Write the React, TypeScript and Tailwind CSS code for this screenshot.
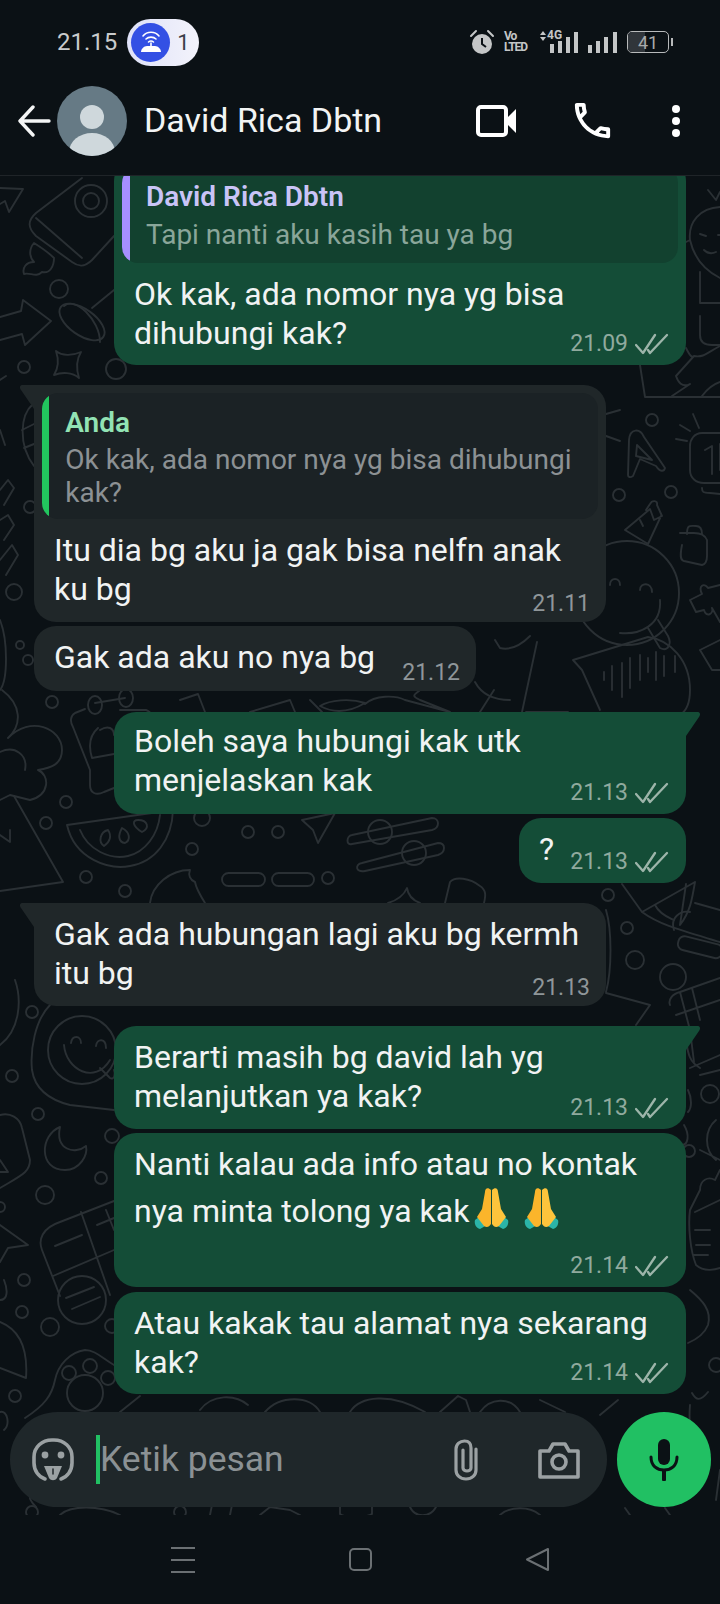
import React from 'react';

function Wallpaper() {
  return (
    <svg className="absolute inset-0 w-full h-full" viewBox="0 176 720 1339" preserveAspectRatio="none" fill="none" stroke="#2a3034" strokeWidth="1.9" strokeLinecap="round" strokeLinejoin="round">
      {/* top left */}
      <path d="M0 188L23 189L9 212L5 201L0 204" />
      <path d="M82 178L36 213C27 221 28 228 36 236L72 262C80 268 86 266 92 260L114 236M36 218L82 258" />
      <path d="M34 243C28 250 30 258 34 262C26 262 22 268 24 274C30 272 36 278 42 272C50 274 54 266 54 258C48 252 42 248 34 243Z" />
      <circle cx="91" cy="201" r="16" />
      <circle cx="91" cy="201" r="8" />
      <circle cx="59" cy="289" r="9" />
      <path d="M0 317L21 311L23 300L51 321L25 345L22 334L0 340" />
      <ellipse cx="82" cy="322" rx="26" ry="13" transform="rotate(35 82 322)" />
      <path d="M64 306C75 296 100 320 100 342M92 308L114 290" />
      <path d="M56 351C62 356 72 356 81 352C76 360 76 368 79 378C72 372 62 372 54 375C59 367 59 360 56 351Z" />
      <circle cx="24" cy="367" r="6" />
      <circle cx="116" cy="369" r="10" />
      <path d="M33 404C20 415 18 445 34 466M22 430L34 424M24 448L34 444" />
      <path d="M0 380L6 376M0 430L5 445" />
      <path d="M0 490L8 480L14 488L4 505M0 520L8 515L14 525L4 540" />
      <circle cx="30" cy="507" r="6" />
      <path d="M0 560L12 545L18 555L6 575" />
      <circle cx="14" cy="592" r="8" />
      <circle cx="28" cy="660" r="5" />
      <circle cx="20" cy="645" r="4" />
      <path d="M0 620C8 640 8 680 0 690" />
      {/* top right */}
      <path d="M708 190L716 200L720 192M690 240C688 222 700 208 720 207M690 240L686 242M690 240C695 262 708 272 720 278" />
      <path d="M700 234L706 236M718 235L720 235M704 250C708 254 712 254 716 252" />
      <path d="M700 272V303H720M700 316V335C700 342 705 345 712 345H720" />
      <path d="M640 365L645 397H720M686 348C690 356 692 358 694 356C704 358 708 352 720 346M694 356L676 376C678 382 682 388 690 384L672 396M702 396C708 388 714 384 720 382" />
      <path d="M628 475L629 440C630 428 640 428 644 437L665 468C664 472 660 472 656 466L640 459L633 476C630 478 628 477 628 475ZM637 445L652 460L636 456Z" />
      <circle cx="652" cy="420" r="6" />
      <path d="M693 414L699 428M680 425L690 431M676 439L687 441" />
      <path d="M720 433H702C694 433 690 440 690 446V470C690 478 696 483 704 483H720M705 450L712 446V474M720 444V470M702 488C702 494 704 492 720 494" />
      <path d="M620 410L606 414M606 436L620 441" />
      <circle cx="619" cy="495" r="6" />
      <circle cx="671" cy="492" r="6" />
      <path d="M625 530L650 509L654 520L662 516L657 505C658 500 652 500 650 504L646 510M625 530L648 544L661 516M640 520L643 526" />
      <path d="M682 545C680 555 680 560 684 561L702 565C706 564 707 560 707 556L707 540C705 535 700 533 694 533L680 533M687 534C687 524 690 526 696 526C701 526 702 530 702 534" />
      <path d="M720 585L708 588C704 582 698 586 702 594L690 600L696 612L704 610C706 618 714 614 712 608L720 622" />
      <circle cx="627" cy="593" r="52" fill="none" />
      <path d="M610 585C610 577 620 577 620 585M640 590C640 582 652 582 652 592M660 600C662 625 640 635 620 633" />
      <path d="M648 628L660 648C668 652 672 644 668 636L658 620" />
      <path d="M573 660L648 637M573 660L582 670L600 710M648 637C670 640 690 660 690 690C690 700 688 710 680 715" />
      <path d="M604 672V680M612 666V690M622 663V697M630 658V688M640 655V680M648 658V672M656 652V680M664 656V676M675 656V672" />
      <path d="M537 642L522 712M526 712H568M495 640L500 648C508 650 518 648 530 636" />
      <path d="M700 650L720 640M700 650L712 670L720 670" />
      {/* middle left */}
      <path d="M2 690C22 705 22 725 8 738C30 715 62 728 62 750C62 765 50 768 38 770C50 775 50 795 30 800L10 795L0 800M0 752C15 745 28 755 25 770" />
      <path d="M95 703L125 698" />
      <ellipse cx="95" cy="705" rx="7" ry="9" />
      <ellipse cx="126" cy="698" rx="7" ry="9" />
      <path d="M85 709L75 713C70 716 70 722 73 727L90 770V785C90 793 96 796 104 792L114 788M120 710H146C152 712 154 720 154 728M98 728C90 735 88 745 92 758L114 754M100 730C108 725 114 728 114 735" />
      <circle cx="52" cy="702" r="6" />
      <circle cx="66" cy="802" r="6" />
      <circle cx="46" cy="823" r="6" />
      <circle cx="86" cy="877" r="6" />
      <circle cx="125" cy="891" r="6" />
      <circle cx="192" cy="849" r="6" />
      <circle cx="248" cy="832" r="6" />
      <circle cx="278" cy="832" r="6" />
      <circle cx="328" cy="878" r="6" />
      <circle cx="202" cy="818" r="8" />
      <path d="M67 825C75 860 110 870 130 866C155 862 172 840 173 810L67 825ZM80 830C88 850 110 860 128 856C145 852 158 835 160 815" />
      <path d="M108 830C100 832 98 842 104 846C110 842 112 836 108 830ZM122 828C118 835 118 842 125 843C131 840 130 832 122 828ZM138 820C132 820 132 826 142 832C150 828 148 820 138 820Z" />
      <path d="M14 796L63 882L0 891M0 835L10 842L10 830" />
      <rect x="222" y="873" width="43" height="13" rx="6.5" />
      <rect x="272" y="873" width="42" height="13" rx="6.5" />
      <path d="M302 820L335 813L318 843L313 830Z" />
      <path d="M352 835L432 818C440 818 440 828 432 830L352 844C346 846 346 836 352 835Z" />
      <circle cx="380" cy="832" r="12" />
      <path d="M362 863L438 843C446 843 446 852 438 855L365 871C355 873 355 864 362 863Z" />
      <circle cx="414" cy="853" r="12" />
      <path d="M150 903C152 885 170 870 190 870C188 875 190 880 195 882C196 888 200 895 205 903" />
      <path d="M388 903C398 900 404 895 407 888C408 895 412 900 420 903M445 903L450 882C455 876 470 878 480 886C486 890 486 895 484 903" />
      <path d="M320 706C330 700 350 698 365 703C350 712 335 714 320 706ZM365 704C375 695 395 695 405 700M405 700L450 712L420 700C410 695 415 695 420 690" />
      <path d="M180 700L198 694L205 712M250 712L290 700L295 712M310 700L322 712" />
      <path d="M475 682C482 695 495 700 510 700M480 712L494 690" />
      {/* middle right */}
      <path d="M622 884L642 912M642 912L695 882M642 912C660 925 680 930 720 942M695 882C692 900 690 912 680 925L686 884M655 905C660 915 670 918 674 920" />
      <path d="M674 930C670 918 680 910 690 912M695 903L720 910" />
      <rect x="680" y="935" width="45" height="14" rx="6" transform="rotate(14 680 935)" />
      <circle cx="608" cy="895" r="6" />
      <circle cx="627" cy="928" r="6" />
      <circle cx="635" cy="960" r="9" />
      <circle cx="673" cy="977" r="13" />
      <path d="M606 910C612 930 612 970 606 992M606 993L650 1005L636 1025" />
      <path d="M670 1005C668 1000 672 994 680 992L720 978M680 992L690 1030M676 1015L720 1000M690 1030L694 1062M692 988L700 1020" />
      <path d="M690 1068L720 1055M686 1040C688 1055 690 1062 700 1068" />
      <path d="M700 1075L720 1070M688 1090C692 1098 692 1108 688 1112" />
      <path d="M684 1125C690 1135 688 1145 682 1145" />
      <circle cx="710" cy="1094" r="9" />
      <path d="M716 1120C704 1130 704 1150 716 1160M700 1150L720 1160" />
      {/* right lower */}
      <circle cx="689" cy="1151" r="6" />
      <path d="M720 1170L715 1180C708 1176 700 1180 700 1190L690 1210C688 1225 690 1250 696 1265C704 1272 715 1270 720 1268M695 1212L720 1200M696 1245H710M694 1255H708M695 1230H710" />
      <path d="M690 1290C702 1300 712 1310 708 1325C704 1335 695 1340 688 1343" />
      <circle cx="716" cy="1365" r="7" />
      <path d="M692 1393C696 1400 700 1402 708 1392M690 1405C688 1430 692 1440 705 1440M720 1470L716 1500" />
      {/* left lower */}
      <path d="M0 1045C20 1030 22 1000 15 980" />
      <circle cx="32" cy="1012" r="6" />
      <path d="M50 1005C35 1020 30 1050 32 1070C35 1090 50 1100 70 1105L114 1110" />
      <circle cx="82" cy="1050" r="34" />
      <path d="M71 1043C72 1035 81 1035 81 1043M96 1046C97 1038 106 1038 106 1048M64 1045C66 1070 95 1085 110 1060M100 1068L110 1078C114 1080 116 1075 114 1070" />
      <circle cx="12" cy="1076" r="6" />
      <circle cx="38" cy="1114" r="6" />
      <circle cx="101" cy="1178" r="6" />
      <circle cx="45" cy="1195" r="9" />
      <circle cx="24" cy="1280" r="6" />
      <circle cx="22" cy="1312" r="6" />
      <circle cx="50" cy="1327" r="9" />
      <circle cx="15" cy="1396" r="6" />
      <circle cx="112" cy="1136" r="7" />
      <circle cx="112" cy="1326" r="7" />
      <path d="M60 1127C40 1135 38 1170 65 1170C80 1170 88 1155 86 1146C75 1155 55 1150 60 1127Z" />
      <path d="M0 1115C10 1112 20 1118 22 1128L30 1160C30 1172 22 1175 0 1188M0 1160L8 1172H0" />
      <circle cx="0" cy="1207" r="5" />
      <path d="M0 1225L28 1245L8 1248L0 1262" />
      <path d="M4 1280C8 1290 8 1300 0 1300" />
      <path d="M60 1222L114 1201M60 1222C42 1228 38 1240 42 1250L60 1296M53 1276L114 1250M81 1212L110 1295M97 1225L114 1218M106 1210L114 1230M55 1246L82 1235" />
      <circle cx="82" cy="1300" r="24" />
      <path d="M66 1298L94 1287M72 1309L100 1297" />
      <path d="M0 1322C20 1330 28 1350 26 1378L0 1368" />
      <circle cx="85" cy="1393" r="18" />
      <circle cx="69" cy="1373" r="7" />
      <circle cx="90" cy="1366" r="7" />
      <circle cx="108" cy="1378" r="7" />
      <path d="M25 1418C45 1405 52 1395 55 1380C58 1365 70 1352 85 1350C95 1350 102 1358 114 1365" />
      {/* input area edges */}
      <path d="M0 1412C8 1410 10 1425 4 1430M36 1507C24 1495 32 1492 40 1500" />
      <circle cx="32" cy="1512" r="6" />
      <circle cx="180" cy="1512" r="6" />
      <path d="M120 1412L140 1396M200 1410C212 1394 235 1394 248 1405M265 1412C280 1395 310 1395 320 1412M350 1412C360 1396 390 1392 425 1412M440 1412L458 1396L466 1400L470 1412M480 1412C490 1398 510 1396 520 1412M540 1400L565 1412M600 1415L618 1400" />
      <path d="M60 1515C70 1505 100 1505 120 1515M210 1515L212 1505M230 1515L232 1505M260 1515L270 1507L290 1510L300 1515M340 1507V1514C345 1518 365 1518 372 1514V1507M410 1507C415 1518 430 1518 436 1507M500 1515C510 1506 530 1506 540 1515M625 1508L630 1515M665 1508L670 1515" />
    </svg>
  );
}

function Ticks() {
  return (
    <svg width="34" height="22" viewBox="0 0 34 22" fill="none" stroke="#9db5aa" strokeWidth="2.3" strokeLinecap="round" strokeLinejoin="round">
      <path d="M1 12L8 20L20 2" />
      <path d="M13 17L15 20L32 2" />
    </svg>
  );
}

function Tail({ out }: { out?: boolean }) {
  if (out) {
    return (
      <svg className="absolute -right-[15px] top-0" width="17" height="26" viewBox="0 0 17 26">
        <path d="M0 0H13C16 0 17 2 15 5L2 24V26H0Z" fill="#144d37" />
      </svg>
    );
  }
  return (
    <svg className="absolute -left-[15px] top-0" width="17" height="26" viewBox="0 0 17 26">
      <path d="M17 0H4C1 0 0 2 2 5L15 24V26H17Z" fill="#202729" />
    </svg>
  );
}

function Time({ value, out }: { value: string; out?: boolean }) {
  return (
    <div className={`absolute flex items-center gap-[7px] text-[23px] leading-[30px] ${out ? 'right-[17px] bottom-[6px]' : 'right-[16px] bottom-[3px]'}`}>
      <span className={out ? 'text-[#90aa9e]' : 'text-[#8f9699]'}>{value}</span>
      {out && <Ticks />}
    </div>
  );
}

function Bubble({ out, tail, time, width, className, children }: { out?: boolean; tail?: boolean; time: string; width: string; className?: string; children: React.ReactNode }) {
  return (
    <div className={`relative rounded-[22px] ${out ? 'self-end bg-[#144d37]' : 'self-start bg-[#202729]'} ${tail ? (out ? 'rounded-tr-none' : 'rounded-tl-none') : ''} ${width} ${className || ''}`}>
      {tail && <Tail out={out} />}
      {children}
      <Time value={time} out={out} />
    </div>
  );
}

function Text({ children }: { children: React.ReactNode }) {
  return <p className="px-5 py-[12px] text-[32px] leading-[39px] text-[#f1f3f3]">{children}</p>;
}

function Pray() {
  return (
    <svg className="inline-block align-[-8px]" width="35" height="43" viewBox="0 0 35 43">
      <path d="M1 33L9 27L13 38L6 42C2 41 0 37 1 33Z" fill="#2bb5a8" />
      <path d="M34 33L26 27L22 38L29 42C33 41 35 37 34 33Z" fill="#2bb5a8" />
      <path d="M17 37V3C14 0 11 1 11 5L8 22L3 30L10 39C13 41 15 40 17 37Z" fill="#fbb52b" />
      <path d="M18 37V3C21 0 24 1 24 5L27 22L32 30L25 39C22 41 20 40 18 37Z" fill="#fdc43c" />
    </svg>
  );
}

function StatusBar() {
  return (
    <div className="h-[84px] flex items-center justify-between pl-[57px] pr-[47px]">
      <div className="flex items-center gap-[10px]">
        <span className="text-[24px] text-[#c9cbcc]">21.15</span>
        <div className="flex items-center w-[72px] h-[47px] rounded-full bg-gradient-to-r from-[#dfe2f8] to-[#f3f3fb] pl-[4px]">
          <div className="w-[39px] h-[39px] rounded-full bg-[#3350e4] flex items-center justify-center">
            <svg width="26" height="26" viewBox="0 0 26 26" fill="none" stroke="#fff" strokeWidth="1.6" strokeLinecap="round">
              <path d="M5 7C9 2 17 2 21 7" />
              <path d="M8 10C10.500 7.500 15.500 7.500 18 10" />
              <path d="M10.500 13C12 11.800 14 11.800 15.500 13" />
              <path d="M3 23C3 20 6 17 9 17H17C20 17 23 20 23 23Z" fill="#fff" stroke="none" />
              <path d="M13 14V17" />
            </svg>
          </div>
          <span className="ml-[7px] text-[22px] text-[#3b3d48]">1</span>
        </div>
      </div>
      <div className="flex items-center">
        <svg width="26" height="26" viewBox="0 0 26 26" fill="#c4c6c7">
          <circle cx="13" cy="15" r="10" />
          <path d="M13 9V15L17 18" fill="none" stroke="#0b1115" strokeWidth="2" />
          <path d="M2 7L7 2M24 7L19 2" fill="none" stroke="#c4c6c7" strokeWidth="2" strokeLinecap="round" />
        </svg>
        <div className="ml-[9px] flex flex-col text-[#c4c6c7] font-bold text-[12px] leading-[11px] tracking-[-1px] w-[26px]">
          <span>Vo</span>
          <span>LTED</span>
        </div>
        <div className="relative ml-[10px] w-[41px] h-[22px]">
          <svg className="absolute left-0 top-0" width="41" height="22" viewBox="0 0 41 22" fill="#c4c6c7">
            <path d="M3 0L6 4H0ZM3 10L6 6H0Z" />
            <rect x="10" y="13" width="4" height="9" />
            <rect x="18" y="10" width="4" height="12" />
            <rect x="26" y="6" width="4" height="16" />
            <rect x="34" y="1" width="4" height="21" />
          </svg>
          <span className="absolute left-[7px] -top-[2px] text-[12px] font-bold text-[#c4c6c7] bg-[#0b1115] leading-[12px]">4G</span>
        </div>
        <svg className="ml-[7px]" width="29" height="22" viewBox="0 0 29 22" fill="#c4c6c7">
          <rect x="0" y="14" width="4" height="8" />
          <rect x="8" y="10" width="4" height="12" />
          <rect x="16" y="6" width="4" height="16" />
          <rect x="25" y="1" width="4" height="21" />
        </svg>
        <div className="ml-[10px] relative flex items-center justify-center w-[42px] h-[22px] rounded-[5px] border border-[#b8babb] text-[18px] text-[#a8aaab] overflow-hidden">
          <div className="absolute left-0 top-0 bottom-0 w-[17px] bg-[#30353a]"></div>
          <span className="relative">41</span>
        </div>
        <div className="ml-[2px] w-[2px] h-[8px] bg-[#b8babb]"></div>
      </div>
    </div>
  );
}

function Header() {
  return (
    <div className="h-[92px] flex items-center border-b border-[#1f2428] pb-[18px]">
      <svg className="ml-[17px]" width="34" height="32" viewBox="0 0 34 32" fill="none" stroke="#f4f5f5" strokeWidth="3.4" strokeLinecap="round" strokeLinejoin="round">
        <path d="M32 16H3M16 2L3 16L16 30" />
      </svg>
      <svg className="ml-[6px]" width="70" height="70" viewBox="0 0 70 70">
        <defs>
          <clipPath id="avatar"><circle cx="35" cy="35" r="35" /></clipPath>
        </defs>
        <g clipPath="url(#avatar)">
          <rect width="70" height="70" fill="#667a85" />
          <circle cx="35" cy="31" r="12" fill="#cfd8dc" />
          <ellipse cx="35" cy="66" rx="23" ry="19" fill="#cfd8dc" />
        </g>
      </svg>
      <span className="ml-[17px] text-[34px] text-[#f2f4f4] flex-1">David Rica Dbtn</span>
      <svg width="42" height="32" viewBox="0 0 42 32">
        <rect x="2" y="2" width="28" height="28" rx="3" fill="none" stroke="#fff" strokeWidth="4" />
        <path d="M31 13L40 4V28L31 19Z" fill="#fff" />
      </svg>
      <svg className="ml-[51px]" width="47" height="47" viewBox="0 0 24 24" fill="#fff">
        <path d="M6.54 5c.06.89.21 1.76.45 2.59l-1.2 1.2c-.41-1.2-.67-2.47-.76-3.79h1.51m9.86 12.02c.85.24 1.72.39 2.6.45v1.49c-1.32-.09-2.59-.35-3.8-.75l1.2-1.19M7.5 3H4c-.55 0-1 .45-1 1 0 9.39 7.61 17 17 17 .55 0 1-.45 1-1v-3.49c0-.55-.45-1-1-1-1.24 0-2.45-.2-3.57-.57-.1-.04-.21-.05-.31-.05-.26 0-.51.1-.71.29l-2.2 2.2c-2.83-1.45-5.15-3.76-6.59-6.59l2.2-2.2c.28-.28.36-.67.25-1.02C8.7 6.45 8.5 5.25 8.5 4c0-.55-.45-1-1-1z" />
      </svg>
      <div className="ml-[56px] mr-[40px] flex flex-col gap-[4px]">
        <div className="w-[8px] h-[8px] rounded-full bg-white"></div>
        <div className="w-[8px] h-[8px] rounded-full bg-white"></div>
        <div className="w-[8px] h-[8px] rounded-full bg-white"></div>
      </div>
    </div>
  );
}

function InputBar() {
  return (
    <div className="absolute left-[10px] right-[9px] bottom-[8px] flex items-center justify-between">
      <div className="w-[597px] h-[95px] rounded-[48px] bg-[#1f272a] flex items-center">
        <svg className="ml-[22px]" width="42" height="44" viewBox="0 0 42 44" fill="none" stroke="#9ba1a3" strokeWidth="3.600" strokeLinejoin="round" strokeLinecap="round">
          <path d="M13 41C7 39 2 33 2 25V19C2 9 10 2 20 2H22C32 2 40 9 40 19V25C40 33 35 39 29 41" />
          <path d="M12 28H30L25 40C23 43 19 43 17 40Z" fill="#9ba1a3" stroke="none" />
          <path d="M21 31V36" stroke="#1f272a" strokeWidth="1.500" />
          <circle cx="13" cy="17" r="3.400" fill="#9ba1a3" stroke="none" />
          <circle cx="29" cy="17" r="3.400" fill="#9ba1a3" stroke="none" />
        </svg>
        <div className="ml-[22px] w-[4px] h-[49px] bg-[#21c063]"></div>
        <span className="text-[35.5px] text-[#8b9194] flex-1">Ketik pesan</span>
        <svg width="28" height="42" viewBox="0 0 28 42" fill="none" stroke="#9ba1a3" strokeWidth="3.200" strokeLinecap="round">
          <path d="M24 10V31C24 36 20 40 14 40C8 40 4 36 4 31V10C4 5 8 2 12.500 2C17 2 19 5 19 9V29C19 33 11 33 11 29V11" />
        </svg>
        <svg className="ml-[58px] mr-[27px]" width="42" height="38" viewBox="0 0 42 38" fill="none" stroke="#9ba1a3" strokeWidth="3.600" strokeLinejoin="round">
          <path d="M2 10H11L15 3H27L31 10H40V36H2Z" />
          <circle cx="21" cy="21" r="7" />
        </svg>
      </div>
      <div className="w-[94px] h-[95px] rounded-full bg-[#21c063] flex items-center justify-center">
        <svg width="30" height="42" viewBox="0 0 30 42" fill="#0b1115">
          <rect x="9" y="0" width="12" height="26" rx="6" />
          <path d="M2 18C2 27 8 31 15 31C22 31 28 27 28 18" fill="none" stroke="#0b1115" strokeWidth="3" strokeLinecap="round" />
          <rect x="13" y="30" width="4" height="12" rx="1" />
        </svg>
      </div>
    </div>
  );
}

function NavBar() {
  return (
    <div className="h-[89px] flex items-center justify-center">
      <div className="flex flex-col gap-[10px] w-[24px]">
        <div className="h-[2px] bg-[#6b7073]"></div>
        <div className="h-[2px] bg-[#6b7073]"></div>
        <div className="h-[2px] bg-[#6b7073]"></div>
      </div>
      <div className="ml-[154px] w-[23px] h-[23px] rounded-[5px] border-2 border-[#6b7073]"></div>
      <svg className="ml-[153px]" width="25" height="25" viewBox="0 0 25 25" fill="none" stroke="#6b7073" strokeWidth="2" strokeLinejoin="round">
        <path d="M23 2V23L2 12.500Z" />
      </svg>
    </div>
  );
}

export default function App() {
  return (
    <div className="w-[720px] h-[1604px] flex flex-col bg-[#0b1115] overflow-hidden font-['Roboto',sans-serif]">
      <StatusBar />
      <Header />
      <div className="relative flex-1 overflow-hidden">
        <Wallpaper />
        <div className="relative flex flex-col px-[34px] -mt-[17px]">
          <Bubble out time="21.09" width="w-[572px]" className="pt-2">
            <div className="mx-2 flex rounded-[16px] bg-[#12412f] overflow-hidden">
              <div className="w-[8px] bg-[#a68fff] rounded-l-[16px]"></div>
              <div className="pl-4 pt-[12px] pb-[12px]">
                <p className="text-[28px] leading-[36px] font-semibold text-[#c9c4f7]">David Rica Dbtn</p>
                <p className="mt-[3px] text-[28px] leading-[33px] text-[#8aa69a]">Tapi nanti aku kasih tau ya bg</p>
              </div>
            </div>
            <Text>Ok kak, ada nomor nya yg bisa dihubungi kak?</Text>
          </Bubble>

          <Bubble tail time="21.11" width="w-[572px]" className="mt-[20px] pt-2 pb-[1px]">
            <div className="mx-2 flex rounded-[16px] bg-[#1b2225] overflow-hidden">
              <div className="w-[8px] bg-[#22c55e] rounded-l-[16px]"></div>
              <div className="pl-4 pr-4 pt-[12px] pb-[10px]">
                <p className="text-[28px] leading-[36px] font-semibold text-[#92e3b4]">Anda</p>
                <p className="mt-[2px] text-[28px] leading-[33px] text-[#8c9194]">Ok kak, ada nomor nya yg bisa dihubungi kak?</p>
              </div>
            </div>
            <Text>Itu dia bg aku ja gak bisa nelfn anak ku bg</Text>
          </Bubble>

          <Bubble time="21.12" width="w-[442px]" className="mt-[4px] h-[65px]">
            <Text>Gak ada aku no nya bg</Text>
          </Bubble>

          <Bubble out tail time="21.13" width="w-[572px]" className="mt-[21px]">
            <p className="px-5 pt-[10px] pb-[14px] text-[32px] leading-[39px] text-[#f1f3f3]">Boleh saya hubungi kak utk menjelaskan kak</p>
          </Bubble>

          <Bubble out time="21.13" width="w-[167px]" className="mt-[4px] h-[65px]">
            <Text>?</Text>
          </Bubble>

          <Bubble tail time="21.13" width="w-[572px]" className="mt-[20px] pb-[1px]">
            <Text>Gak ada hubungan lagi aku bg kermh itu bg</Text>
          </Bubble>

          <Bubble out tail time="21.13" width="w-[572px]" className="mt-[20px] pb-[1px]">
            <Text>Berarti masih bg david lah yg melanjutkan ya kak?</Text>
          </Bubble>

          <Bubble out time="21.14" width="w-[572px]" className="mt-[4px] h-[154px]">
            <p className="px-5 pt-[8px] text-[32px] leading-[46px] text-[#f1f3f3]">
              Nanti kalau ada info atau no kontak nya minta tolong ya kak<span className="ml-[5px]"><Pray /></span><span className="ml-[15px]"><Pray /></span>
            </p>
          </Bubble>

          <Bubble out time="21.14" width="w-[572px]" className="mt-[5px]">
            <Text>Atau kakak tau alamat nya sekarang kak?</Text>
          </Bubble>
        </div>
        <InputBar />
      </div>
      <NavBar />
    </div>
  );
}
